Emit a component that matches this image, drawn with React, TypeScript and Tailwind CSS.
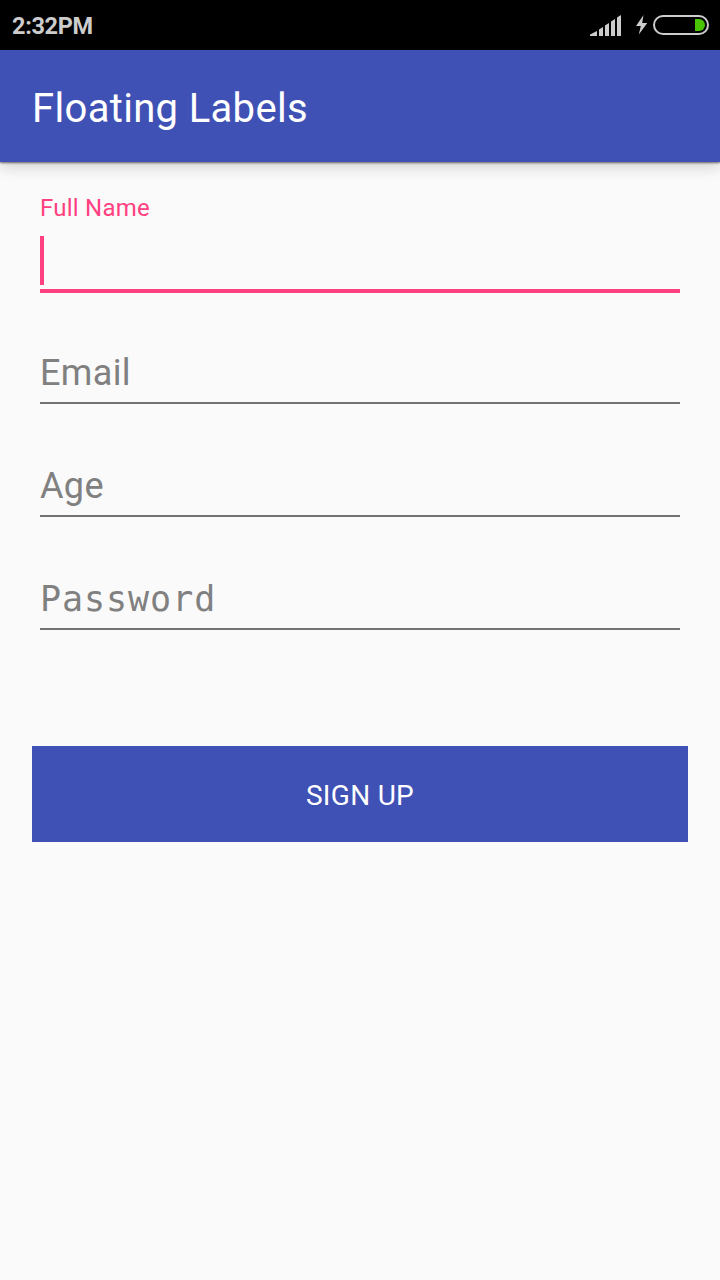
import clsx from 'clsx';

interface FieldProps {
  label: string;
  mono?: boolean;
}

function StatusIcons() {
  return (
    <svg className="h-[50px] w-[130px]" viewBox="590 0 130 50" fill="none">
      <g fill="#cccccc">
        <path d="M590 36V34.6L597 31V36Z" />
        <path d="M599 36V29.5L603 27V36Z" />
        <path d="M605 36V25.5L609 23V36Z" />
        <path d="M611 36V21.5L615 19V36Z" />
        <path d="M617 36V17.5L621 15V36Z" />
        <path d="M643.5 15L636 26H640.8L638.8 34.5L647.3 23H642.2Z" />
      </g>
      <rect x="654" y="16" width="54" height="18" rx="9" stroke="#cccccc" strokeWidth="2" />
      <path d="M695 19H699A6 6 0 0 1 699 31H695Z" fill="#48c400" />
    </svg>
  );
}

function StatusBar() {
  return (
    <div className="flex h-[50px] items-center justify-between bg-black pl-3">
      <span className="pt-[3px] text-[23.5px] leading-none font-bold tracking-[-0.35px] text-[#cccccc]">
        2:32PM
      </span>
      <StatusIcons />
    </div>
  );
}

function FocusedField({ label }: FieldProps) {
  return (
    <div className="border-b-4 border-[#ff4081] pb-1">
      <p className="h-[42px] text-2xl leading-[28px] tracking-[0.25px] text-[#ff4081]">{label}</p>
      <div className="h-[49px] w-1 bg-[#ff4081]" />
    </div>
  );
}

function Field({ label, mono }: FieldProps) {
  return (
    <div className="flex h-[113px] items-end border-b-2 border-[#737373] pb-1.5">
      <p
        className={clsx(
          'leading-[46px] text-[#808080]',
          mono
            ? "font-['DejaVu_Sans_Mono',monospace] text-[35px] tracking-[0.95px]"
            : 'text-4xl tracking-[0.35px]'
        )}
      >
        {label}
      </p>
    </div>
  );
}

export default function App() {
  return (
    <div className="flex h-[1280px] w-[720px] flex-col overflow-hidden bg-[#fafafa] font-[Roboto,sans-serif]">
      <StatusBar />
      <header className="flex h-28 items-center bg-[#3f51b5] px-8 shadow-[0_1px_2px_rgba(0,0,0,0.55),0_5px_14px_rgba(0,0,0,0.16)]">
        <h1 className="pt-1.5 text-[40px] leading-none tracking-[0.33px] text-white">
          Floating Labels
        </h1>
      </header>

      <main className="px-8 pt-8">
        <div className="px-2">
          <FocusedField label="Full Name" />
          <div className="-mt-0.5">
            <Field label="Email" />
            <Field label="Age" />
            <Field label="Password" mono />
          </div>
        </div>
        <button className="mt-[116px] h-24 w-full bg-[#3f51b5] pt-1 text-[28px] tracking-[0.3px] text-white">
          SIGN UP
        </button>
      </main>
    </div>
  );
}
